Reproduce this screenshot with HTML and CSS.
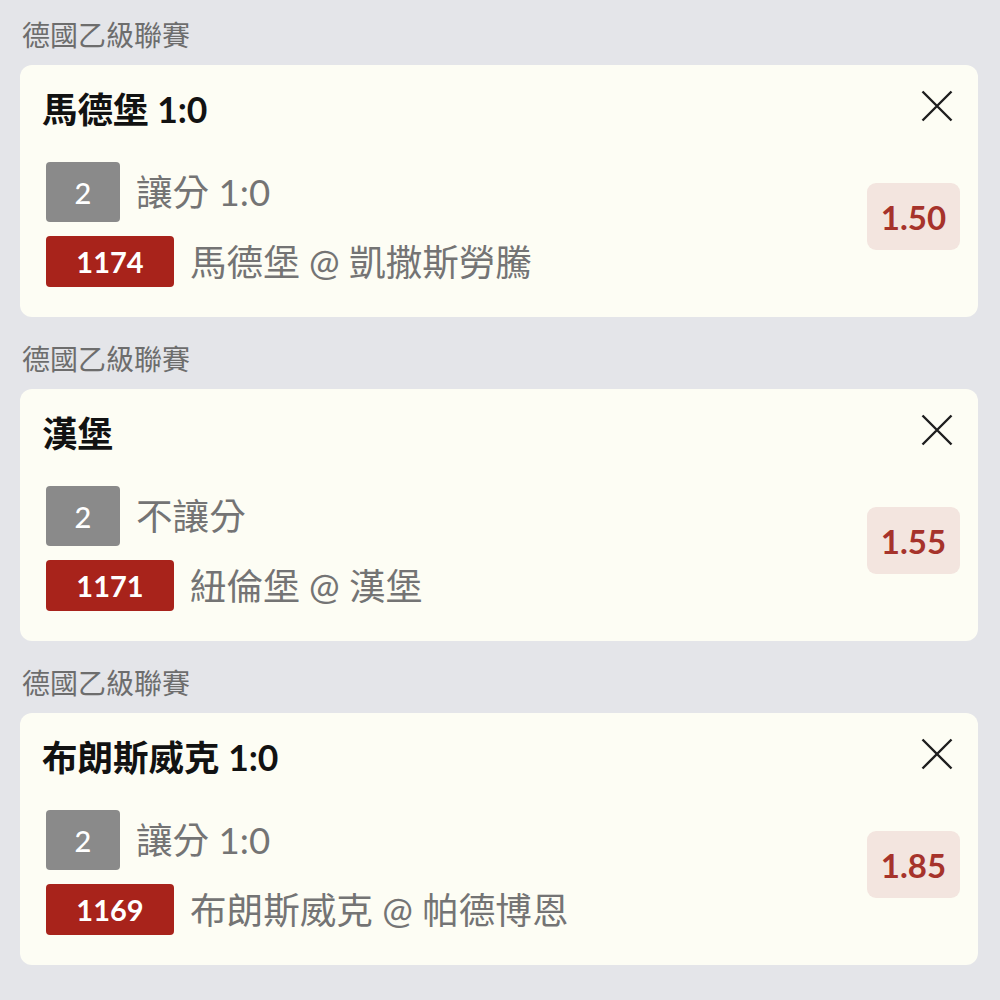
FILE: index.html
```html
<!doctype html>
<html>
<head>
	<meta charset="utf-8">
	<title>投注單</title>
	<link rel="stylesheet" href="styles.css">
</head>
<body>
	<div class="slip">
		<section class="bet">
			<div class="league">德國乙級聯賽</div>
			<div class="card">
				<div class="head">
					<div class="title">馬德堡 1:0</div>
					<svg class="close" width="32" height="32" viewBox="0 0 32 32"><path d="M1.5 1.5L30.5 30.5M30.5 1.5L1.5 30.5"/></svg>
				</div>
				<div class="body">
					<div class="rows">
						<div class="row"><span class="badge pos">2</span><span class="text">讓分 1:0</span></div>
						<div class="row"><span class="badge code">1174</span><span class="text">馬德堡 @ 凱撒斯勞騰</span></div>
					</div>
					<div class="odds">1.50</div>
				</div>
			</div>
		</section>

		<section class="bet">
			<div class="league">德國乙級聯賽</div>
			<div class="card">
				<div class="head">
					<div class="title">漢堡</div>
					<svg class="close" width="32" height="32" viewBox="0 0 32 32"><path d="M1.5 1.5L30.5 30.5M30.5 1.5L1.5 30.5"/></svg>
				</div>
				<div class="body">
					<div class="rows">
						<div class="row"><span class="badge pos">2</span><span class="text">不讓分</span></div>
						<div class="row"><span class="badge code">1171</span><span class="text">紐倫堡 @ 漢堡</span></div>
					</div>
					<div class="odds">1.55</div>
				</div>
			</div>
		</section>

		<section class="bet">
			<div class="league">德國乙級聯賽</div>
			<div class="card">
				<div class="head">
					<div class="title">布朗斯威克 1:0</div>
					<svg class="close" width="32" height="32" viewBox="0 0 32 32"><path d="M1.5 1.5L30.5 30.5M30.5 1.5L1.5 30.5"/></svg>
				</div>
				<div class="body">
					<div class="rows">
						<div class="row"><span class="badge pos">2</span><span class="text">讓分 1:0</span></div>
						<div class="row"><span class="badge code">1169</span><span class="text">布朗斯威克 @ 帕德博恩</span></div>
					</div>
					<div class="odds">1.85</div>
				</div>
			</div>
		</section>
	</div>
</body>
</html>
```

FILE: styles.css
```css
html,
body {
	margin: 0;
	background: #e4e5e9;
}

body {
	font-family: Lato, "Noto Sans CJK TC", sans-serif;
}

.slip {
	display: flex;
	flex-direction: column;
	gap: 22px;
	padding: 15px 22px 0 20px;
}

.league {
	height: 40px;
	line-height: 40px;
	margin-bottom: 10px;
	padding-left: 2px;
	font-size: 28px;
	color: #6d6d6d;
}

.card {
	background: #fdfdf4;
	border-radius: 12px;
	padding: 25px 18px 30px 22px;
}

.head {
	display: flex;
	justify-content: space-between;
	align-items: flex-start;
	height: 40px;
}

.title {
	font-size: 35.5px;
	line-height: 40px;
	font-weight: 700;
	color: #121212;
}

.close {
	margin-right: 7px;
}

.close path {
	stroke: #1e1e1e;
	stroke-width: 2.4;
	fill: none;
}

.body {
	display: flex;
	justify-content: space-between;
	align-items: flex-start;
	margin-top: 32px;
}

.rows {
	display: flex;
	flex-direction: column;
	gap: 14px;
	padding-left: 4px;
}

.row {
	display: flex;
	align-items: center;
	gap: 16px;
}

.badge {
	display: flex;
	align-items: center;
	justify-content: center;
	color: #fff;
	font-size: 29px;
}

.pos {
	width: 74px;
	height: 60px;
	border-radius: 4px;
	background: #8a8a8a;
	font-weight: 500;
}

.code {
	width: 128px;
	height: 51px;
	border-radius: 4px;
	background: #a8231b;
	font-weight: 700;
}

.text {
	font-size: 36.6px;
	line-height: 40px;
	color: #747474;
}

.odds {
	margin-top: 21px;
	width: 93px;
	height: 67px;
	border-radius: 9px;
	background: #f3e5df;
	color: #a6332b;
	font-size: 33px;
	font-weight: 700;
	display: flex;
	align-items: center;
	justify-content: center;
}
```
